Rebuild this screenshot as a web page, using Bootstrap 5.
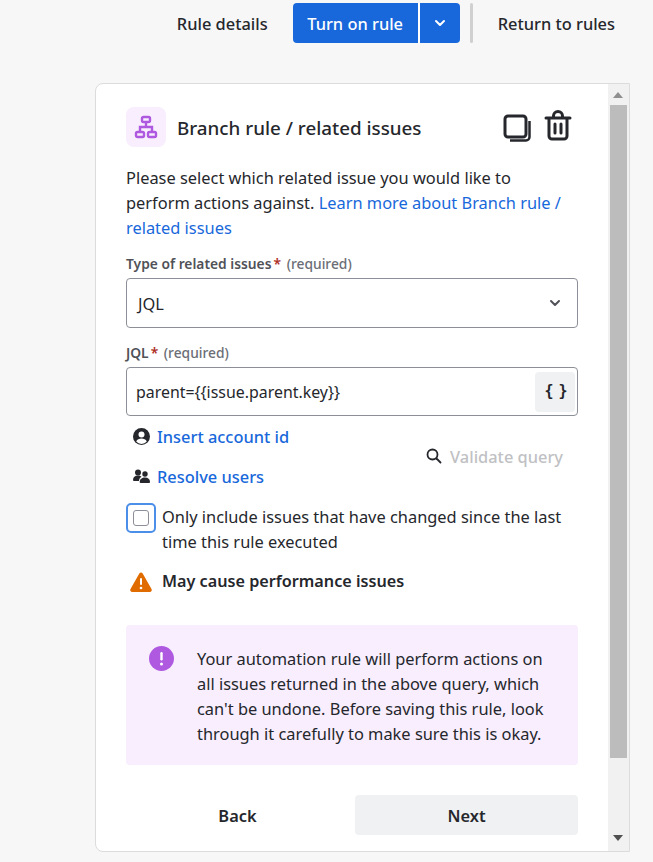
<!DOCTYPE html>
<html lang="en"><head><meta charset="utf-8"><title>Branch rule</title>
<link href="https://cdn.jsdelivr.net/npm/bootstrap@5.3.0/dist/css/bootstrap.min.css" rel="stylesheet">
<style>
html,body{height:862px;overflow:hidden}
body{background:#f7f7f7;font-family:"Noto Sans","Open Sans",sans-serif;font-size:16.400px;line-height:25px;color:#25272c}
.topbar{height:47px;padding:3px 38px 0 0}
.plain-act{color:#25272c;font-weight:500;text-decoration:none}
.primary-split{height:40px;background:#1868db;border-radius:4px;color:#fff;font-weight:500;overflow:hidden}
.primary-main{width:127px;border-right:2px solid #fff}
.primary-caret{width:40px}
.bar-sep{width:3px;height:40px;background:#d0d0d0;border-radius:2px;margin:0 25px 0 10px}
.panel{width:535px;height:769px;margin:36px 0 0 95px;background:#fff;border:1px solid #dcdcdc;border-radius:8px 0 0 8px;overflow:hidden}
.panel-body{width:511px;padding:23px 29px 0 30px}
.rule-icon{width:40px;height:40px;background:#f8eefe;border-radius:8px}
.rule-title{font-size:18.800px;font-weight:500;margin:2px 0 0 11px;line-height:38px}
.intro{margin:18px 0 0}
.intro a,.lnk{color:#1868db;text-decoration:none}
.lnk{font-weight:500}
.fld-label{font-size:13.800px;font-weight:600;line-height:20px;color:#505258}
.fld-label i{color:#ae2e24;font-style:normal;margin-left:2px}
.fld-label span{font-weight:500;color:#6b6e76;margin-left:2px}
.sel-box{height:50px;border:1px solid #8c8f97;border-radius:4px;padding:0 16px 0 11px;margin-top:4px}
.jql-box{height:49px;border:1px solid #8c8f97;border-radius:4px;padding:0 2px 0 9px;margin-top:4px}
.jql-val{font-size:15.900px;padding-top:1px}
.brace-btn{width:40px;height:40px;background:#f0f1f2;border-radius:4px;font-weight:700;font-family:"DejaVu Sans Mono",monospace;font-size:15px;letter-spacing:-2px}
.ico-col{width:24px}
.valid{color:#bfc1c4;font-weight:500;margin-right:15px}
.chk-ring{width:30px;height:30px;border:2px solid #4c8fe8;border-radius:5px;flex:none;margin-top:-1px}
.chk-inner{width:16px;height:16px;border:1px solid #8c8f97;border-radius:3px;background:#fff}
.warn-t{font-weight:600;margin-left:10px;font-size:16.200px}
.note{background:#f8eefe;border-radius:4px;height:140px;margin-top:31px;padding:21px 22px 0 23px}
.note-txt{margin-left:23px;width:360px}
.btn-back,.btn-next{height:40px;width:223px;font-weight:600;border:0;border-radius:4px;color:#25272c;font-size:16.400px;background:transparent}
.btn-next{background:#f0f1f2}
.sbar{width:21px;background:#f1f1f1;border-left:1px solid #f1f1f1}
.sb-thumb{width:17px;height:653px;background:#bcbcbc;margin:21px 0 0 1px}
</style></head><body>
<div class="topbar d-flex justify-content-end align-items-start">
  <a class="plain-act mt-2" style="margin-right:25px" href="#">Rule details</a>
  <div class="primary-split d-flex">
    <div class="primary-main d-flex align-items-center justify-content-center">Turn on rule</div>
    <div class="primary-caret d-flex align-items-center justify-content-center">
      <svg width="12" height="8" viewBox="0 0 12 8"><path d="M2 2l4 4 4-4" fill="none" stroke="#fff" stroke-width="2" stroke-linecap="round" stroke-linejoin="round"/></svg>
    </div>
  </div>
  <div class="bar-sep"></div>
  <a class="plain-act mt-2" href="#">Return to rules</a>
</div>
<div class="panel d-flex justify-content-between">
  <div class="panel-body">
    <div class="d-flex align-items-center">
      <div class="rule-icon d-flex align-items-center justify-content-center">
        <svg width="24" height="24" viewBox="0 0 24 24" fill="none" stroke="#af59e1" stroke-width="2.400"><rect x="8" y="2" width="8" height="5" rx="1.500"/><rect x="2" y="17" width="8" height="5" rx="1.500"/><rect x="14" y="17" width="8" height="5" rx="1.500"/><path d="M12 7v5M6 17v-5h12v5"/></svg>
      </div>
      <div class="rule-title flex-grow-1">Branch rule / related issues</div>
      <svg width="28" height="29" viewBox="0 0 28 29" fill="none" stroke="#25272c" style="margin:2px 13px 0 0"><rect x="2" y="2" width="21" height="21" rx="3" stroke-width="3"/><path d="M26.500 7v16a3.500 3.500 0 0 1-3.500 3.500H7" stroke-width="2.500"/></svg>
      <svg width="28" height="32" viewBox="0 0 28 32" fill="none" stroke="#25272c" stroke-width="3" stroke-linecap="round" style="margin:-3px 6px 0 0"><path d="M2 8h24M9.500 8V6a4.500 4.500 0 0 1 9 0v2M5 8v18a3 3 0 0 0 3 3h12a3 3 0 0 0 3-3V8"/><path d="M11 14v9M17 14v9"/></svg>
    </div>
    <p class="intro">Please select which related issue you would like to perform actions against. <a href="#">Learn more about Branch rule / related issues</a></p>
    <div class="fld-label" style="margin-top:14px">Type of related issues<i>*</i> <span>(required)</span></div>
    <div class="sel-box d-flex align-items-center justify-content-between">
      <span>JQL</span>
      <svg width="12" height="8" viewBox="0 0 12 8"><path d="M2 2l4 4 4-4" fill="none" stroke="#505258" stroke-width="2" stroke-linecap="round" stroke-linejoin="round"/></svg>
    </div>
    <div class="fld-label" style="margin-top:15px">JQL<i>*</i> <span>(required)</span></div>
    <div class="jql-box d-flex align-items-center justify-content-between">
      <span class="jql-val">parent={{issue.parent.key}}</span>
      <div class="brace-btn d-flex align-items-center justify-content-center">{&#8202;}</div>
    </div>
    <div class="d-flex justify-content-between align-items-center" style="margin-top:7px">
      <div class="d-flex flex-column">
        <div class="d-flex align-items-center" style="height:26px;padding-left:7px">
          <div class="ico-col d-flex"><svg width="17" height="17" viewBox="0 0 17 17"><circle cx="8.500" cy="8.500" r="8.500" fill="#25272c"/><circle cx="8.500" cy="6.500" r="3" fill="#fff"/><path d="M3.200 13.500c1-2.300 3-3 5.300-3s4.300.7 5.300 3a7 7 0 0 1-10.600 0z" fill="#fff"/></svg></div>
          <a class="lnk" href="#">Insert account id</a>
        </div>
        <div class="d-flex align-items-center" style="height:26px;margin-top:14px;padding-left:7px">
          <div class="ico-col d-flex"><svg width="17" height="15" viewBox="0 0 17 15" fill="#25272c"><circle cx="5" cy="3.500" r="3"/><circle cx="12" cy="5" r="2.700"/><path d="M0 11c0-3 2-4.500 5-4.500 1.500 0 2.700.4 3.500 1.200C7 8.500 6 10 6 12H1a1 1 0 0 1-1-1z"/><path d="M7.500 14c-.5 0-.8-.4-.8-1 0-3 2.300-4.500 5.300-4.500s5 1.500 5 4.500c0 .6-.3 1-.8 1z"/></svg></div>
          <a class="lnk" href="#">Resolve users</a>
        </div>
      </div>
      <div class="valid d-flex align-items-center">
        <svg class="me-2" width="16" height="16" viewBox="0 0 16 16" fill="none" stroke="#25272c" stroke-width="1.800" stroke-linecap="round"><circle cx="6.500" cy="6.500" r="5"/><path d="M10.500 10.500L14.500 14.500"/></svg>
        <span>Validate query</span>
      </div>
    </div>
    <div class="d-flex" style="gap:6px;margin-top:15px">
      <div class="chk-ring d-flex align-items-center justify-content-center"><div class="chk-inner"></div></div>
      <div>Only include issues that have changed since the last time this rule executed</div>
    </div>
    <div class="d-flex align-items-center" style="margin-top:15px">
      <svg class="ms-1" width="22" height="20" viewBox="0 0 22 20"><path d="M9.300 1.500a2 2 0 0 1 3.400 0l8.800 15.500a2 2 0 0 1-1.700 3H2.200a2 2 0 0 1-1.700-3z" fill="#e06c00"/><rect x="10" y="6" width="2" height="7" rx="1" fill="#fff"/><circle cx="11" cy="16" r="1.300" fill="#fff"/></svg>
      <span class="warn-t">May cause performance issues</span>
    </div>
    <div class="note d-flex align-items-start">
      <svg width="25" height="25" viewBox="0 0 25 25" style="flex:none"><circle cx="12.500" cy="12.500" r="12.500" fill="#af59e1"/><rect x="11.300" y="6" width="2.400" height="8.500" rx="1.200" fill="#fff"/><circle cx="12.500" cy="18" r="1.500" fill="#fff"/></svg>
      <div class="note-txt">Your automation rule will perform actions on all issues returned in the above query, which can't be undone. Before saving this rule, look through it carefully to make sure this is okay.</div>
    </div>
    <div class="d-flex justify-content-between" style="margin-top:30px">
      <button class="btn-back" type="button">Back</button>
      <button class="btn-next" type="button">Next</button>
    </div>
  </div>
  <div class="sbar d-flex flex-column position-relative">
    <svg class="position-absolute" style="margin:8px 0 0 4px" width="10" height="6" viewBox="0 0 10 6"><path d="M5 0l5 6H0z" fill="#8f8f8f"/></svg>
    <div class="sb-thumb"></div>
    <svg style="margin:77px 0 0 4px" width="10" height="6" viewBox="0 0 10 6"><path d="M0 0h10L5 6z" fill="#505050"/></svg>
  </div>
</div>
</body></html>
